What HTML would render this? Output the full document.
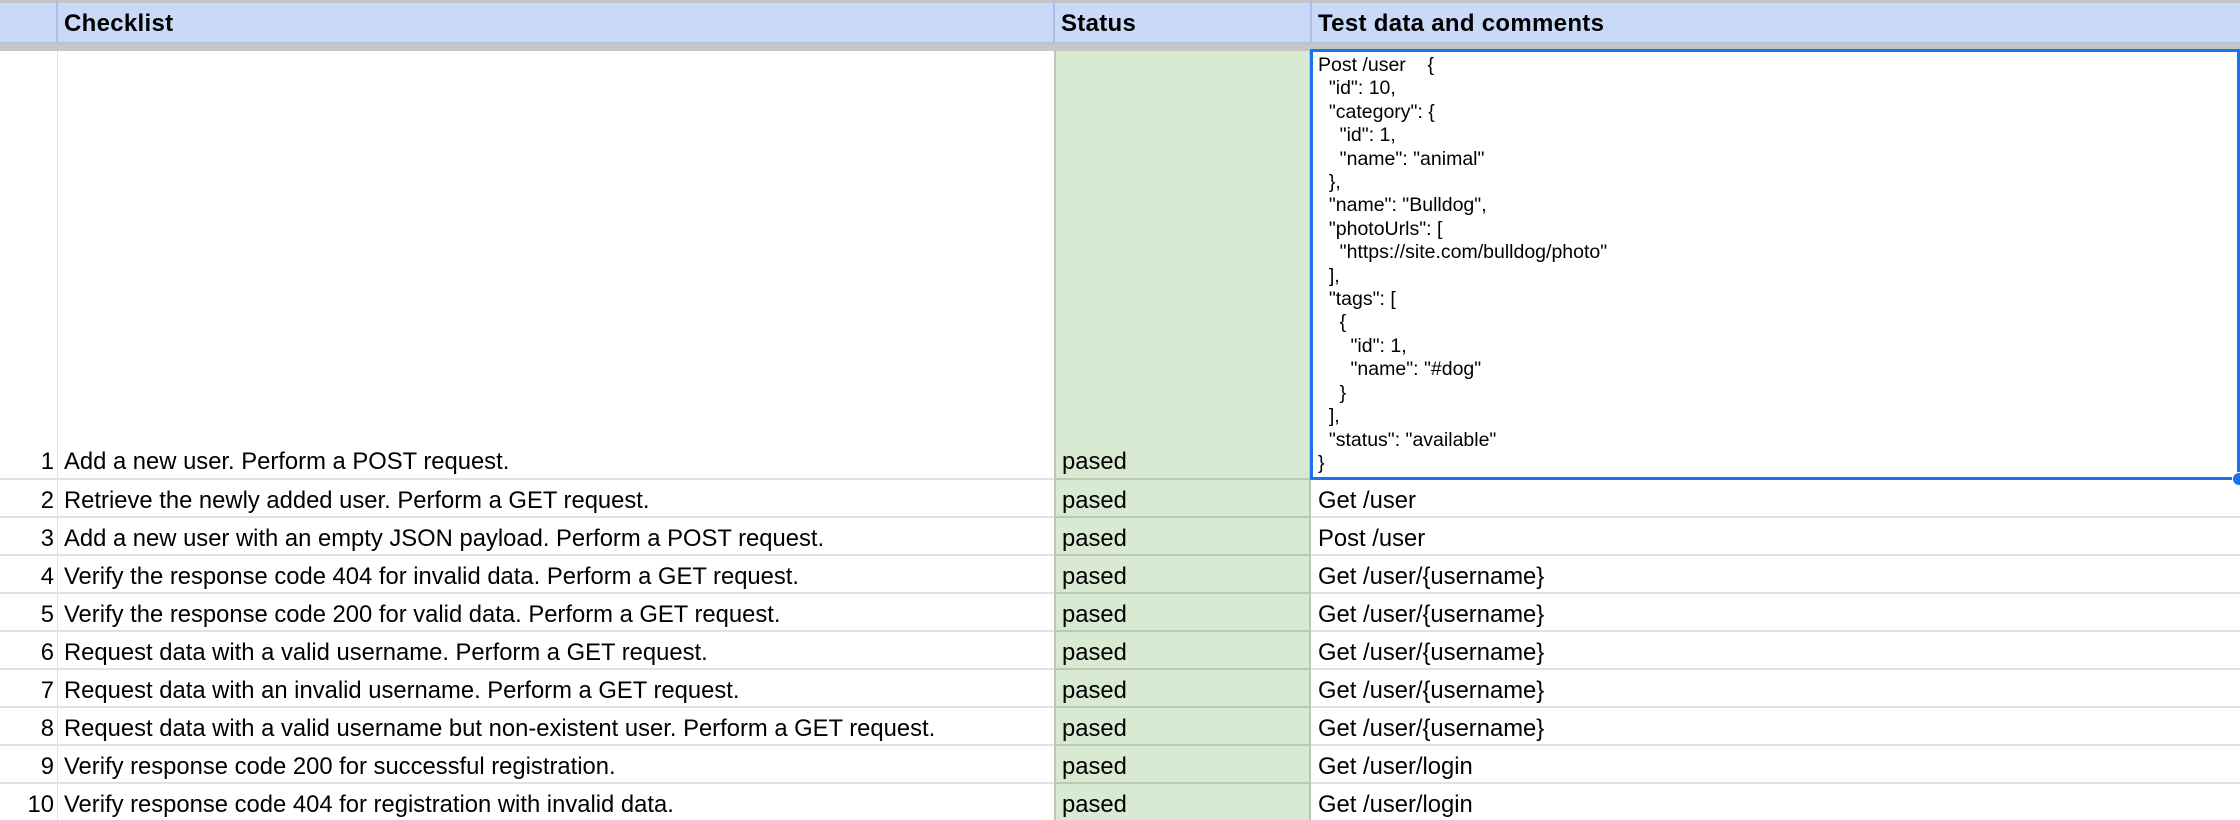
<!DOCTYPE html>
<html><head><meta charset="utf-8"><style>
*{margin:0;padding:0;box-sizing:border-box}
body{width:2240px;height:820px;overflow:hidden;background:#fff;font-family:"Liberation Sans",Arial,sans-serif;color:#000;position:relative}
.a{position:absolute}
.hdr{top:0;left:0;width:2240px;height:43px;background:#c9daf8;border-top:3px solid #c4c4c4;border-bottom:1px solid #a9bfe3}
.bar{top:43px;left:0;width:2240px;height:8px;background:#c6c6c6}
.vh{top:0;height:43px;width:2px;background:#a9bfe3}
.ht{top:10px;font-size:24px;font-weight:bold;letter-spacing:0.3px}
.v{width:1px;background:#e1e1e1;top:51px;height:769px}
.h{height:2px;background:#e1e1e1;left:0;width:2240px}
.st{left:1054px;width:257px;top:51px;height:769px;background:#d9ead3;border-left:2px solid #b9c9b4;border-right:2px solid #b9c9b4}
.sh{left:1054px;width:257px;height:2px;background:#b9c9b4}
.t{font-size:23.8px;white-space:nowrap}
.n{width:54px;text-align:right;font-size:23.8px}
.sel{left:1310px;top:49px;width:930px;height:431px;border:3px solid #1a73e8}
.json{left:1318px;top:54px;font-size:19.5px;line-height:23.4px;white-space:pre}
</style></head><body>
<div class="a hdr"></div>
<div class="a vh" style="left:56px"></div>
<div class="a vh" style="left:1053px"></div>
<div class="a vh" style="left:1310px"></div>
<div class="a ht" style="left:64px">Checklist</div>
<div class="a ht" style="left:1061px">Status</div>
<div class="a ht" style="left:1318px">Test data and comments</div>
<div class="a bar"></div>
<div class="a st"></div>
<div class="a v" style="left:57px"></div>
<div class="a h" style="top:478px"></div>
<div class="a h" style="top:516px"></div>
<div class="a h" style="top:554px"></div>
<div class="a h" style="top:592px"></div>
<div class="a h" style="top:630px"></div>
<div class="a h" style="top:668px"></div>
<div class="a h" style="top:706px"></div>
<div class="a h" style="top:744px"></div>
<div class="a h" style="top:782px"></div>
<div class="a sh" style="top:478px"></div><div class="a sh" style="top:516px"></div><div class="a sh" style="top:554px"></div><div class="a sh" style="top:592px"></div><div class="a sh" style="top:630px"></div><div class="a sh" style="top:668px"></div><div class="a sh" style="top:706px"></div><div class="a sh" style="top:744px"></div><div class="a sh" style="top:782px"></div>
<div class="a json">Post /user    {
  "id": 10,
  "category": {
    "id": 1,
    "name": "animal"
  },
  "name": "Bulldog",
  "photoUrls": [
    "https://site.com/bulldog/photo"
  ],
  "tags": [
    {
      "id": 1,
      "name": "#dog"
    }
  ],
  "status": "available"
}</div>
<div class="a sel"></div>
<div class="a" style="left:2232px;top:472px;width:14px;height:14px;border-radius:50%;background:#1a73e8;border:1px solid #fff"></div>

<div class="a n" style="top:448px">1</div><div class="a t" style="left:64px;top:448px">Add a new user. Perform a POST request.</div><div class="a t" style="left:1062px;top:448px">pased</div>
<div class="a n" style="top:487px">2</div><div class="a t" style="left:64px;top:487px">Retrieve the newly added user. Perform a GET request.</div><div class="a t" style="left:1062px;top:487px">pased</div><div class="a t" style="left:1318px;top:487px">Get /user</div>
<div class="a n" style="top:525px">3</div><div class="a t" style="left:64px;top:525px">Add a new user with an empty JSON payload. Perform a POST request.</div><div class="a t" style="left:1062px;top:525px">pased</div><div class="a t" style="left:1318px;top:525px">Post /user</div>
<div class="a n" style="top:563px">4</div><div class="a t" style="left:64px;top:563px">Verify the response code 404 for invalid data. Perform a GET request.</div><div class="a t" style="left:1062px;top:563px">pased</div><div class="a t" style="left:1318px;top:563px">Get /user/{username}</div>
<div class="a n" style="top:601px">5</div><div class="a t" style="left:64px;top:601px">Verify the response code 200 for valid data. Perform a GET request.</div><div class="a t" style="left:1062px;top:601px">pased</div><div class="a t" style="left:1318px;top:601px">Get /user/{username}</div>
<div class="a n" style="top:639px">6</div><div class="a t" style="left:64px;top:639px">Request data with a valid username. Perform a GET request.</div><div class="a t" style="left:1062px;top:639px">pased</div><div class="a t" style="left:1318px;top:639px">Get /user/{username}</div>
<div class="a n" style="top:677px">7</div><div class="a t" style="left:64px;top:677px">Request data with an invalid username. Perform a GET request.</div><div class="a t" style="left:1062px;top:677px">pased</div><div class="a t" style="left:1318px;top:677px">Get /user/{username}</div>
<div class="a n" style="top:715px">8</div><div class="a t" style="left:64px;top:715px">Request data with a valid username but non-existent user. Perform a GET request.</div><div class="a t" style="left:1062px;top:715px">pased</div><div class="a t" style="left:1318px;top:715px">Get /user/{username}</div>
<div class="a n" style="top:753px">9</div><div class="a t" style="left:64px;top:753px">Verify response code 200 for successful registration.</div><div class="a t" style="left:1062px;top:753px">pased</div><div class="a t" style="left:1318px;top:753px">Get /user/login</div>
<div class="a n" style="top:791px">10</div><div class="a t" style="left:64px;top:791px">Verify response code 404 for registration with invalid data.</div><div class="a t" style="left:1062px;top:791px">pased</div><div class="a t" style="left:1318px;top:791px">Get /user/login</div>
</body></html>
